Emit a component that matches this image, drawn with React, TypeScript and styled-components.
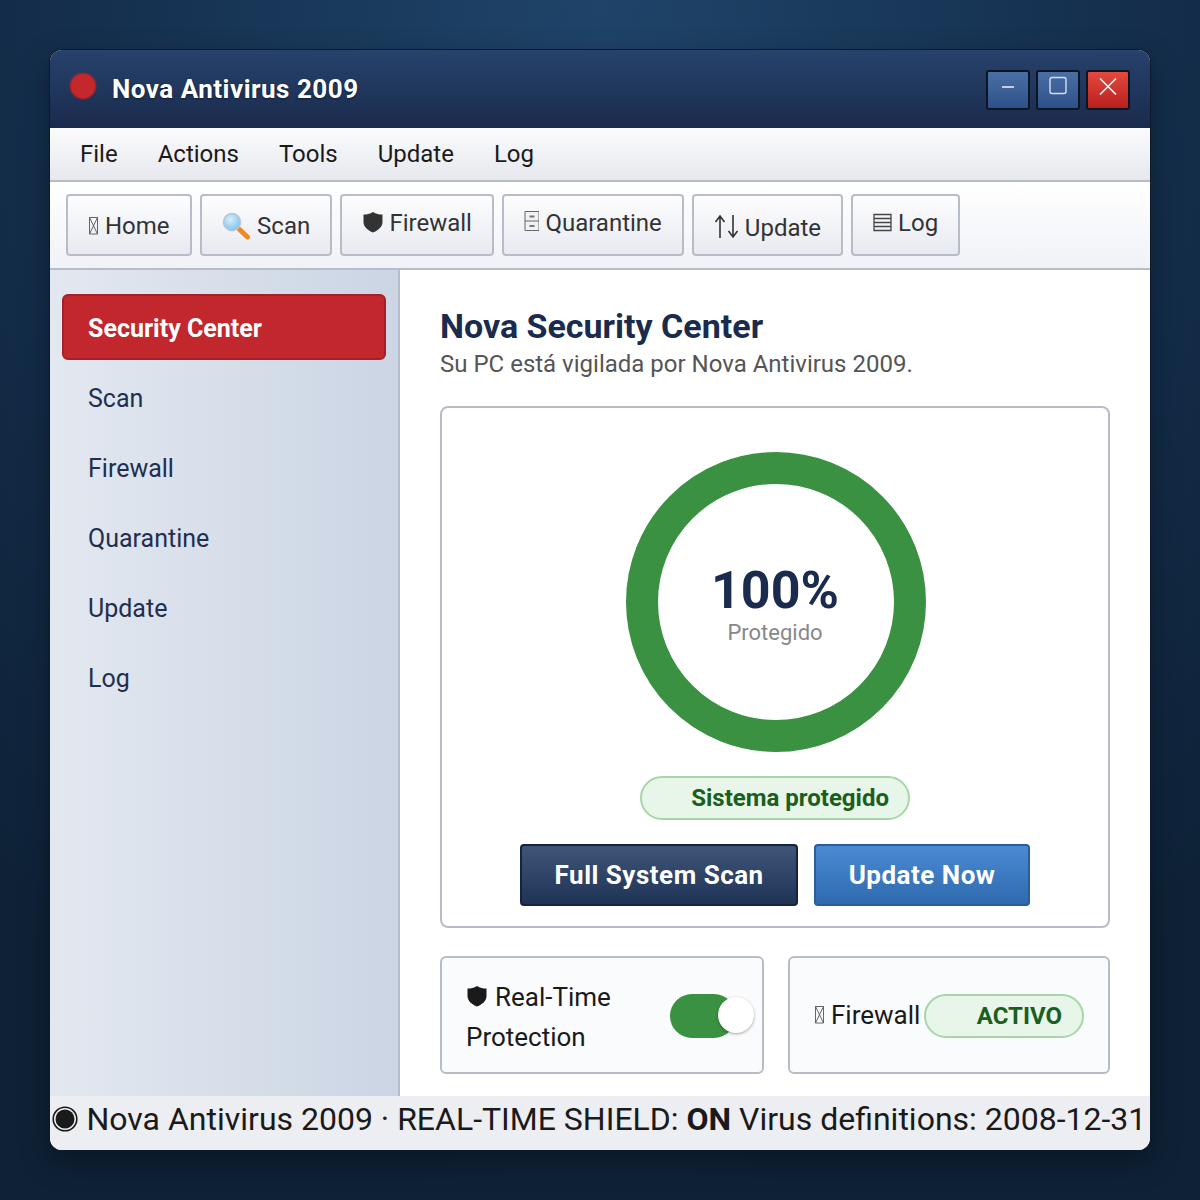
import React from "react";
import styled, { createGlobalStyle } from "styled-components";

const GlobalStyle = createGlobalStyle`
  html, body { margin: 0; padding: 0; }
  body {
    width: 1200px;
    height: 1200px;
    overflow: hidden;
    font-family: Roboto, "Liberation Sans", sans-serif;
    background: radial-gradient(ellipse 900px 1200px at 50% 0%, #1f4469 0%, #15304f 55%, #0e2136 100%);
  }
`;

const Page = styled.div`
  width: 1200px;
  height: 1200px;
  padding: 50px;
  box-sizing: border-box;
`;

const Window = styled.div`
  width: 1100px;
  height: 1100px;
  display: flex;
  flex-direction: column;
  border-radius: 12px;
  overflow: hidden;
  background: #fff;
  box-shadow: 0 0 0 1px #0c1a2c, 0 10px 30px rgba(0, 0, 0, 0.35);
`;

const TitleBar = styled.div`
  height: 78px;
  flex: none;
  display: flex;
  align-items: center;
  padding: 0 20px;
  box-sizing: border-box;
  background: linear-gradient(#27426c, #1a2b4d);
`;

const Lamp = styled.div`
  width: 26px;
  height: 26px;
  margin: -6px 16px 0 0;
  box-sizing: border-box;
  border: 1px solid #b71c1c;
  border-radius: 50%;
  background: #c5282c;
  box-shadow: 0 0 2px rgba(229, 57, 53, 0.5);
`;

const Title = styled.div`
  flex: 1;
  font-size: 26px;
  font-weight: 700;
  letter-spacing: 0.5px;
  color: #fff;
  text-shadow: 0 1px 2px rgba(0, 0, 0, 0.5);
`;

const WinButtons = styled.div`
  display: flex;
  gap: 6px;
  margin-top: 1px;
`;

const WinButton = styled.div<{ $danger?: boolean }>`
  width: 44px;
  height: 40px;
  box-sizing: border-box;
  border: 2px solid #0c1524;
  border-radius: 3px;
  display: flex;
  align-items: flex-start;
  justify-content: center;
  padding-top: 4px;
  background: ${(p) =>
    p.$danger ? "linear-gradient(#e4493f, #b91f1c)" : "linear-gradient(#4a6fa5, #2d5088)"};
`;

const MenuBar = styled.div`
  height: 54px;
  flex: none;
  display: flex;
  align-items: center;
  gap: 40px;
  padding: 0 30px;
  box-sizing: border-box;
  border-bottom: 2px solid #b8bcc8;
  background: linear-gradient(#fbfbfc, #e6e8ee);
`;

const MenuItem = styled.div`
  font-size: 24px;
  color: #1a1a1a;
`;

const ToolBar = styled.div`
  height: 88px;
  flex: none;
  display: flex;
  align-items: flex-start;
  gap: 8px;
  padding: 12px 16px 0;
  box-sizing: border-box;
  border-bottom: 2px solid #b8bcc8;
  background: linear-gradient(#ffffff, #f0f2f7);
`;

/* $nudge moves the content up or down inside the button, the labels don't share a baseline */
const ToolButton = styled.div<{ $nudge: number }>`
  height: 62px;
  box-sizing: border-box;
  padding: ${(p) => (p.$nudge > 0 ? p.$nudge * 2 : 0)}px 20px
    ${(p) => (p.$nudge < 0 ? -p.$nudge * 2 : 0)}px;
  border: 2px solid #b8bcc8;
  border-radius: 4px;
  font-size: 24px;
  color: #333;
  display: flex;
  align-items: center;
  gap: 6px;
  background: linear-gradient(#fdfdfe, #e8eaf1);
`;

const Body = styled.div`
  flex: 1;
  display: flex;
  min-height: 0;
`;

const Sidebar = styled.div`
  width: 350px;
  flex: none;
  box-sizing: border-box;
  padding: 24px 12px;
  display: flex;
  flex-direction: column;
  gap: 4px;
  border-right: 2px solid #b8bcc8;
  background: linear-gradient(90deg, #e3e8f0, #cbd5e4);
`;

const SideItem = styled.div<{ $active?: boolean }>`
  height: 66px;
  box-sizing: border-box;
  display: flex;
  align-items: center;
  padding: 2px 0 0 ${(p) => (p.$active ? 24 : 26)}px;
  border-radius: 6px;
  font-size: 25px;
  color: ${(p) => (p.$active ? "#fff" : "#1f2f4d")};
  font-weight: ${(p) => (p.$active ? 700 : 400)};
  ${(p) => (p.$active ? "background: #c1272d; border: 2px solid #a81f2a;" : "")}
`;

const Main = styled.div`
  flex: 1;
  padding: 36px 40px 0;
  box-sizing: border-box;
  background: #fff;
`;

const Heading = styled.div`
  font-size: 34px;
  font-weight: 700;
  color: #1a2b4d;
  line-height: 40px;
`;

const Sub = styled.div`
  font-size: 24px;
  color: #555;
  line-height: 36px;
`;

const StatusCard = styled.div`
  margin-top: 24px;
  height: 522px;
  box-sizing: border-box;
  border: 2px solid #b8bcc8;
  border-radius: 8px;
  display: flex;
  flex-direction: column;
  align-items: center;
  padding-top: 44px;
  background: #fff;
`;

const Ring = styled.div`
  width: 300px;
  height: 300px;
  margin-left: 2px;
  box-sizing: border-box;
  border: 32px solid #3a9142;
  border-radius: 50%;
  display: flex;
  flex-direction: column;
  align-items: center;
  justify-content: center;
`;

const Percent = styled.div`
  font-size: 52px;
  font-weight: 700;
  line-height: 60px;
  margin: 4px 2px 0 0;
  color: #1a2b4d;
`;

const RingLabel = styled.div`
  font-size: 22px;
  color: #888;
  line-height: 28px;
  margin: -2px 2px 0 0;
`;

const Pill = styled.div<{ $w: number; $right: number }>`
  width: ${(p) => p.$w}px;
  height: 44px;
  flex: none;
  box-sizing: border-box;
  border: 2px solid #a5d6a7;
  border-radius: 22px;
  background: #e8f5e9;
  color: #1b5e20;
  font-size: 24px;
  font-weight: 700;
  display: flex;
  align-items: center;
  justify-content: flex-end;
  padding-right: ${(p) => p.$right}px;
`;

const CardPill = styled(Pill)`
  margin-top: 2px;
`;

const PillSpot = styled.div`
  margin-top: 24px;
`;

const Actions = styled.div`
  margin-top: 24px;
  display: flex;
  gap: 16px;
`;

const ActionButton = styled.div<{ $blue?: boolean }>`
  height: 62px;
  box-sizing: border-box;
  padding: 0 32.5px;
  display: flex;
  align-items: center;
  border-radius: 4px;
  color: #fff;
  font-size: 26px;
  font-weight: 700;
  letter-spacing: 0.5px;
  border: 2px solid ${(p) => (p.$blue ? "#2a5d9c" : "#16233c")};
  background: ${(p) =>
    p.$blue ? "linear-gradient(#4a8ad4, #2f6aad)" : "linear-gradient(#3f5578, #1f3355)"};
`;

const Cards = styled.div`
  margin-top: 28px;
  display: grid;
  grid-template-columns: 324px 322px;
  gap: 24px;
`;

const MiniCard = styled.div`
  height: 118px;
  box-sizing: border-box;
  border: 2px solid #b8bcc8;
  border-radius: 6px;
  background: #fafbfd;
  display: flex;
  align-items: center;
  justify-content: space-between;
  padding: 0 24px;
  font-size: 26px;
  color: #1a1a1a;
`;

const CardLabel = styled.div`
  width: 180px;
  line-height: 40px;
  padding-top: 4px;

  svg {
    vertical-align: -3px;
    margin-right: 8px;
  }
`;

const FireLabel = styled.div`
  display: flex;
  align-items: center;
  gap: 6px;
  white-space: nowrap;
`;

const Toggle = styled.div`
  position: relative;
  width: 66px;
  height: 44px;
  margin: 2px 2px 0 0;
  flex: none;
  border-radius: 22px;
  background: #3a9142;
`;

const Knob = styled.div`
  position: absolute;
  top: 3px;
  left: 48px;
  width: 36px;
  height: 36px;
  border-radius: 50%;
  background: #fff;
  box-shadow: 0 1px 3px rgba(0, 0, 0, 0.35);
`;

const StatusBar = styled.div`
  height: 54px;
  flex: none;
  display: flex;
  align-items: center;
  gap: 8.5px;
  padding: 0 0 8px 2px;
  box-sizing: border-box;
  white-space: nowrap;
  font-size: 32px;
  color: #1a1a1a;
  background: #eceef2;
`;

const Missing = () => (
  <svg width="11" height="24" viewBox="0 0 11 24">
    <path d="M1.5 3.5h8v16.500h-8zM1.500 3.500l8 16.500M9.500 3.500l-8 16.500" fill="none" stroke="#555" strokeWidth="0.9" />
  </svg>
);

const ShieldIcon = ({ color, w = 21 }: { color: string; w?: number }) => (
  <svg width={w} height="24" viewBox={`0 0 ${w} 24`}>
    <path
      d="M11 1C8 3 5 3.6 1.5 3.6V11C1.5 16 6 19.5 11 21.5C16 19.5 20.5 16 20.5 11V3.6C17 3.6 14 3 11 1Z"
      fill={color}
    />
  </svg>
);

const LensIcon = () => (
  <svg width="29.5" height="28" viewBox="0 0 29.5 28">
    <defs>
      <radialGradient id="lens" cx="0.4" cy="0.35" r="0.7">
        <stop offset="0" stopColor="#d6effb" />
        <stop offset="1" stopColor="#7dc0ea" />
      </radialGradient>
    </defs>
    <path d="M17 17L25.5 25" stroke="#f08a1d" strokeWidth="5" strokeLinecap="round" />
    <circle cx="10" cy="10" r="8.5" fill="url(#lens)" stroke="#b7c6d0" strokeWidth="1.5" />
  </svg>
);

const CabinetIcon = () => (
  <svg width="15.5" height="24" viewBox="0 0 15.5 24">
    <path d="M1 0.5h14v19H1zM1 10h14" fill="#f1f1f1" stroke="#666" strokeWidth="1" />
    <path d="M5.500 5.500h5M5.500 15h5" stroke="#777" strokeWidth="2" />
  </svg>
);

const ArrowsIcon = () => (
  <svg width="25" height="26" viewBox="0 0 25 26">
    <path d="M6 23V1M1.5 7L6 1l4.500 6M19 0v22M14.500 16L19 22l4.500-6" fill="none" stroke="#333" strokeWidth="1.6" />
  </svg>
);

const LogIcon = () => (
  <svg width="19" height="24" viewBox="0 0 19 24">
    <path d="M1 3.500h17v16H1zM1 7.500h17M1 11.500h17M1 15.500h17" fill="none" stroke="#444" strokeWidth="1.3" />
  </svg>
);

const RadioIcon = () => (
  <svg width="26" height="26" viewBox="0 0 26 26">
    <circle cx="13" cy="13" r="11.800" fill="none" stroke="#1a1a1a" strokeWidth="1.600" />
    <circle cx="13" cy="13" r="9.500" fill="#1a1a1a" />
  </svg>
);

export default function App() {
  return (
    <>
      <GlobalStyle />
      <Page>
        <Window>
          <TitleBar>
            <Lamp />
            <Title>Nova Antivirus 2009</Title>
            <WinButtons>
              <WinButton>
                <svg width="24" height="24" viewBox="0 0 24 24">
                  <path d="M6 11h12" stroke="#eef2f8" strokeWidth="1.600" />
                </svg>
              </WinButton>
              <WinButton>
                <svg width="24" height="24" viewBox="0 0 24 24">
                  <rect x="4" y="1.500" width="16" height="16" rx="2" fill="none" stroke="#d5e0f0" strokeWidth="1.400" />
                </svg>
              </WinButton>
              <WinButton $danger>
                <svg width="24" height="24" viewBox="0 0 24 24">
                  <path d="M4 2.500l16 16M20 2.500L4 18.500" stroke="#fff" strokeWidth="1.600" />
                </svg>
              </WinButton>
            </WinButtons>
          </TitleBar>
          <MenuBar>
            {["File", "Actions", "Tools", "Update", "Log"].map((m) => (
              <MenuItem key={m}>{m}</MenuItem>
            ))}
          </MenuBar>
          <ToolBar>
            <ToolButton $nudge={0.5}>
              <Missing />
              Home
            </ToolButton>
            <ToolButton $nudge={0.5}>
              <LensIcon />
              Scan
            </ToolButton>
            <ToolButton $nudge={-2.5}>
              <ShieldIcon color="#333" w={21.2} />
              Firewall
            </ToolButton>
            <ToolButton $nudge={-2.5}>
              <CabinetIcon />
              Quarantine
            </ToolButton>
            <ToolButton $nudge={2.5}>
              <ArrowsIcon />
              Update
            </ToolButton>
            <ToolButton $nudge={-2.5}>
              <LogIcon />
              Log
            </ToolButton>
          </ToolBar>
          <Body>
            <Sidebar>
              <SideItem $active>Security Center</SideItem>
              <SideItem>Scan</SideItem>
              <SideItem>Firewall</SideItem>
              <SideItem>Quarantine</SideItem>
              <SideItem>Update</SideItem>
              <SideItem>Log</SideItem>
            </Sidebar>
            <Main>
              <Heading>Nova Security Center</Heading>
              <Sub>Su PC está vigilada por Nova Antivirus 2009.</Sub>
              <StatusCard>
                <Ring>
                  <Percent>100%</Percent>
                  <RingLabel>Protegido</RingLabel>
                </Ring>
                <PillSpot>
                  <Pill $w={270} $right={19}>Sistema protegido</Pill>
                </PillSpot>
                <Actions>
                  <ActionButton>Full System Scan</ActionButton>
                  <ActionButton $blue>Update Now</ActionButton>
                </Actions>
              </StatusCard>
              <Cards>
                <MiniCard>
                  <CardLabel>
                    <ShieldIcon color="#1a1a1a" />
                    Real-Time Protection
                  </CardLabel>
                  <Toggle>
                    <Knob />
                  </Toggle>
                </MiniCard>
                <MiniCard>
                  <FireLabel>
                    <Missing />
                    Firewall
                  </FireLabel>
                  <CardPill $w={160} $right={20}>ACTIVO</CardPill>
                </MiniCard>
              </Cards>
            </Main>
          </Body>
          <StatusBar>
            <RadioIcon />
            <span>
              Nova Antivirus 2009 · REAL-TIME SHIELD: <b>ON</b> Virus definitions: 2008-12-31
            </span>
          </StatusBar>
        </Window>
      </Page>
    </>
  );
}
